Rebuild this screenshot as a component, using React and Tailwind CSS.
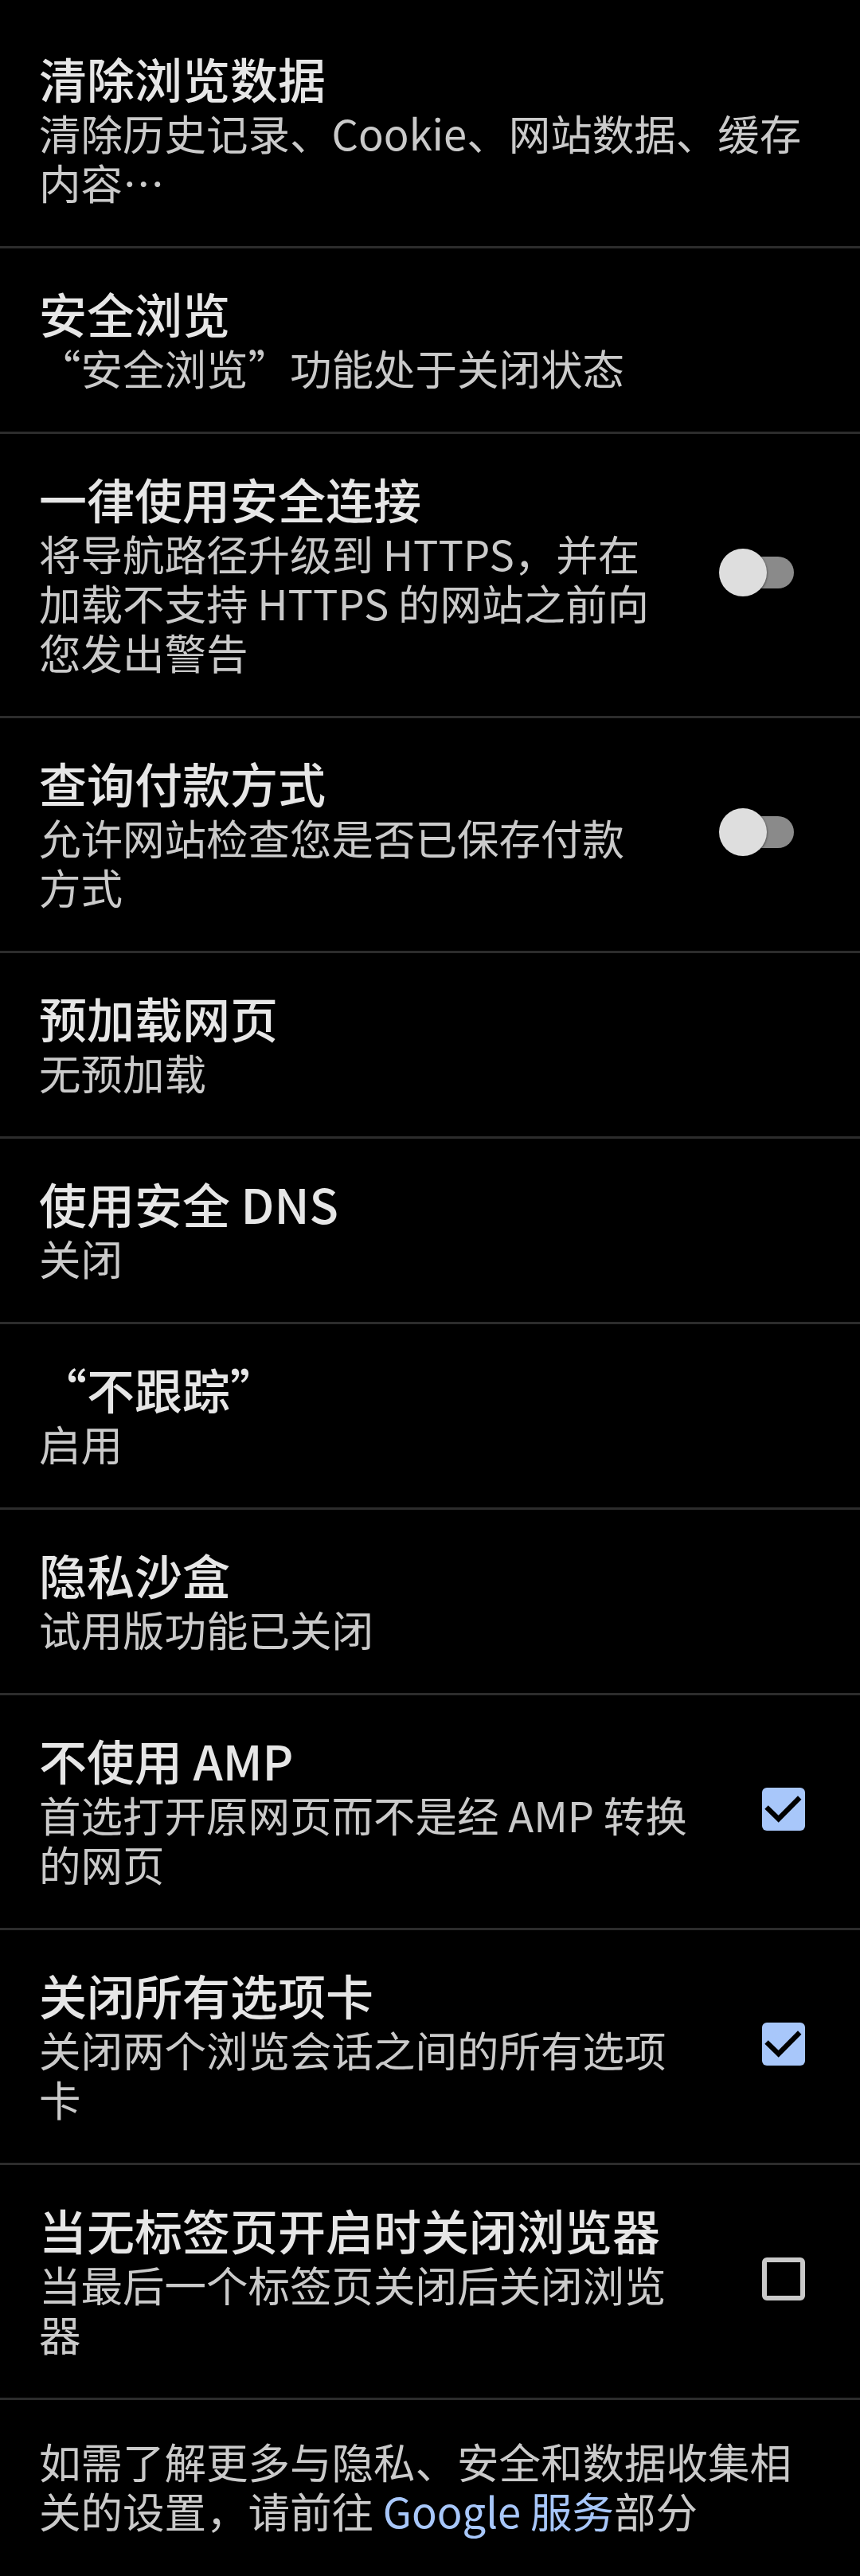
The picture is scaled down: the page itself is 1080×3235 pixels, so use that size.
import React from "react";

function Toggle() {
  return (
    <div className="relative w-[94px] h-[61px] mr-[35px] shrink-0">
      <div className="absolute left-[17px] top-[10px] w-[77px] h-[40px] rounded-full bg-[#8a8a8a]" />
      <div className="absolute left-0 top-0 w-[60px] h-[60px] rounded-full bg-[#dedede] shadow-[0_1px_3px_rgba(0,0,0,0.6)]" />
    </div>
  );
}

function Checkbox({ checked }) {
  if (checked) {
    return (
      <div className="w-[54px] h-[54px] mr-[21px] shrink-0 rounded-[6px] bg-[#a8c7fa] flex items-center justify-center">
        <svg viewBox="0 0 18 18" className="w-[54px] h-[54px]">
          <path d="M2.6 8.9 L6.9 13.1 L15 4.9" fill="none" stroke="#000" strokeWidth="2.1" strokeLinecap="square" />
        </svg>
      </div>
    );
  }
  return <div className="w-[54px] h-[54px] mr-[21px] shrink-0 rounded-[6px] border-[6px] border-[#c9c9c9]" />;
}

const rows = [
  { title: "清除浏览数据", sub: ["清除历史记录、Cookie、网站数据、缓存", "内容…"] },
  { title: "安全浏览", sub: ["“安全浏览”功能处于关闭状态"] },
  { title: "一律使用安全连接", sub: ["将导航路径升级到 HTTPS，并在", "加载不支持 HTTPS 的网站之前向", "您发出警告"], control: "toggle" },
  { title: "查询付款方式", sub: ["允许网站检查您是否已保存付款", "方式"], control: "toggle" },
  { title: "预加载网页", sub: ["无预加载"] },
  { title: "使用安全 DNS", sub: ["关闭"] },
  { title: "“不跟踪”", sub: ["启用"] },
  { title: "隐私沙盒", sub: ["试用版功能已关闭"] },
  { title: "不使用 AMP", sub: ["首选打开原网页而不是经 AMP 转换", "的网页"], control: "checked" },
  { title: "关闭所有选项卡", sub: ["关闭两个浏览会话之间的所有选项", "卡"], control: "checked" },
  { title: "当无标签页开启时关闭浏览器", sub: ["当最后一个标签页关闭后关闭浏览", "器"], control: "unchecked" },
];

function Row({ row, first }) {
  return (
    <div
      className={
        "flex items-center pl-[49px] pr-[48px] pb-[50px] " +
        (first ? "pt-[61px]" : "pt-[44px] border-t-[3px] border-[#2c2c2c]")
      }
    >
      <div className="flex-1 min-w-0">
        <div className="text-[60px] leading-[74px] font-medium text-[#e6e6e6] whitespace-nowrap">{row.title}</div>
        {row.sub.map((l, i) => (
          <div key={i} className="text-[52.5px] leading-[62px] text-[#cacaca] whitespace-nowrap">
            {l}
          </div>
        ))}
      </div>
      {row.control === "toggle" && <Toggle />}
      {row.control === "checked" && <Checkbox checked />}
      {row.control === "unchecked" && <Checkbox checked={false} />}
    </div>
  );
}

export default function App() {
  return (
    <div lang="zh-CN" className="w-[1080px] min-h-[3235px] bg-black font-['Noto_Sans_CJK_SC',sans-serif]">
      {rows.map((r, i) => (
        <Row key={i} row={r} first={i === 0} />
      ))}
      <div className="border-t-[3px] border-[#2c2c2c] pl-[49px] pr-[48px] pt-[45px] pb-[49px]">
        <div className="text-[52.5px] leading-[62px] text-[#cacaca] whitespace-nowrap">如需了解更多与隐私、安全和数据收集相</div>
        <div className="text-[52.5px] leading-[62px] text-[#cacaca] whitespace-nowrap">
          关的设置，请前往 <span className="text-[#a8c7fa]">Google 服务</span>部分
        </div>
      </div>
    </div>
  );
}
